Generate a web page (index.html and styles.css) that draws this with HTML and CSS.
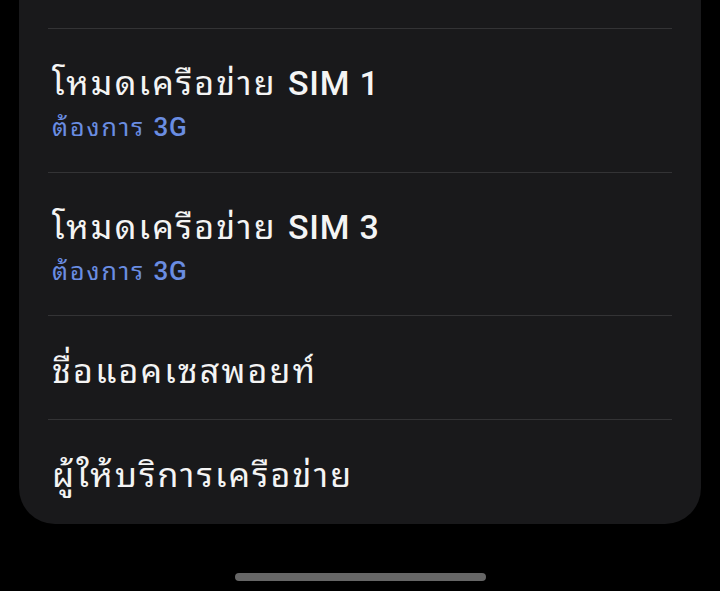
FILE: index.html
```html
<!doctype html>
<html lang="th">
<head>
    <meta charset="UTF-8">
    <title>เครือข่ายมือถือ</title>
    <link rel="stylesheet" href="styles.css">
</head>
<body>
<div class="screen">
    <!-- 设置列表卡片 -->
    <div class="card">
        <div class="item item-cut"></div>
        <div class="item item-two">
            <div class="title">โหมดเครือข่าย <span class="latin">SIM 1</span></div>
            <div class="sub">ต้องการ <span class="latin">3G</span></div>
        </div>
        <div class="item item-two">
            <div class="title">โหมดเครือข่าย <span class="latin">SIM 3</span></div>
            <div class="sub">ต้องการ <span class="latin">3G</span></div>
        </div>
        <div class="item">
            <div class="title">ชื่อแอคเซสพอยท์</div>
        </div>
        <div class="item item-last">
            <div class="title">ผู้ให้บริการเครือข่าย</div>
        </div>
    </div>
    <!-- 底部手势条 -->
    <div class="home-bar"></div>
</div>
</body>
</html>
```

FILE: styles.css
```css
* {
    margin: 0;
    padding: 0;
    box-sizing: border-box;
}

body {
    background: #000;
    font-family: "Noto Sans Thai Looped", "Noto Serif Thai", "Noto Sans Thai", "Noto Sans", "Roboto", sans-serif;
    color: #f4f4f4;
}

.screen {
    width: 720px;
    height: 591px;
    display: flex;
    flex-direction: column;
    align-items: center;
}

.card {
    width: 682px;
    background: #19191b;
    border-radius: 0 0 36px 36px;
    padding: 0 29px;
}

.item {
    height: 104px;
    padding: 0 4px;
    display: flex;
    flex-direction: column;
    justify-content: center;
    border-top: 1px solid #333335;
}

.item-cut {
    height: 29px;
    border-top: 0;
    border-bottom: 1px solid #333335;
}

.item-cut + .item {
    border-top: 0;
}

.item-two {
    height: 143px;
}

.item-last {
    height: 105px;
}

.title {
    font-size: 34px;
    line-height: 42px;
    letter-spacing: 2.2px;
}

.sub {
    font-size: 25px;
    line-height: 30px;
    letter-spacing: 2px;
    color: #6a8de2;
    margin-top: 6px;
}

.latin {
    font-family: "Roboto", sans-serif;
    font-weight: 500;
    letter-spacing: 0.8px;
}

.sub .latin {
    font-size: 26px;
}

.home-bar {
    width: 251px;
    height: 8px;
    border-radius: 4px;
    background: #666;
    margin-top: 49px;
}
```
